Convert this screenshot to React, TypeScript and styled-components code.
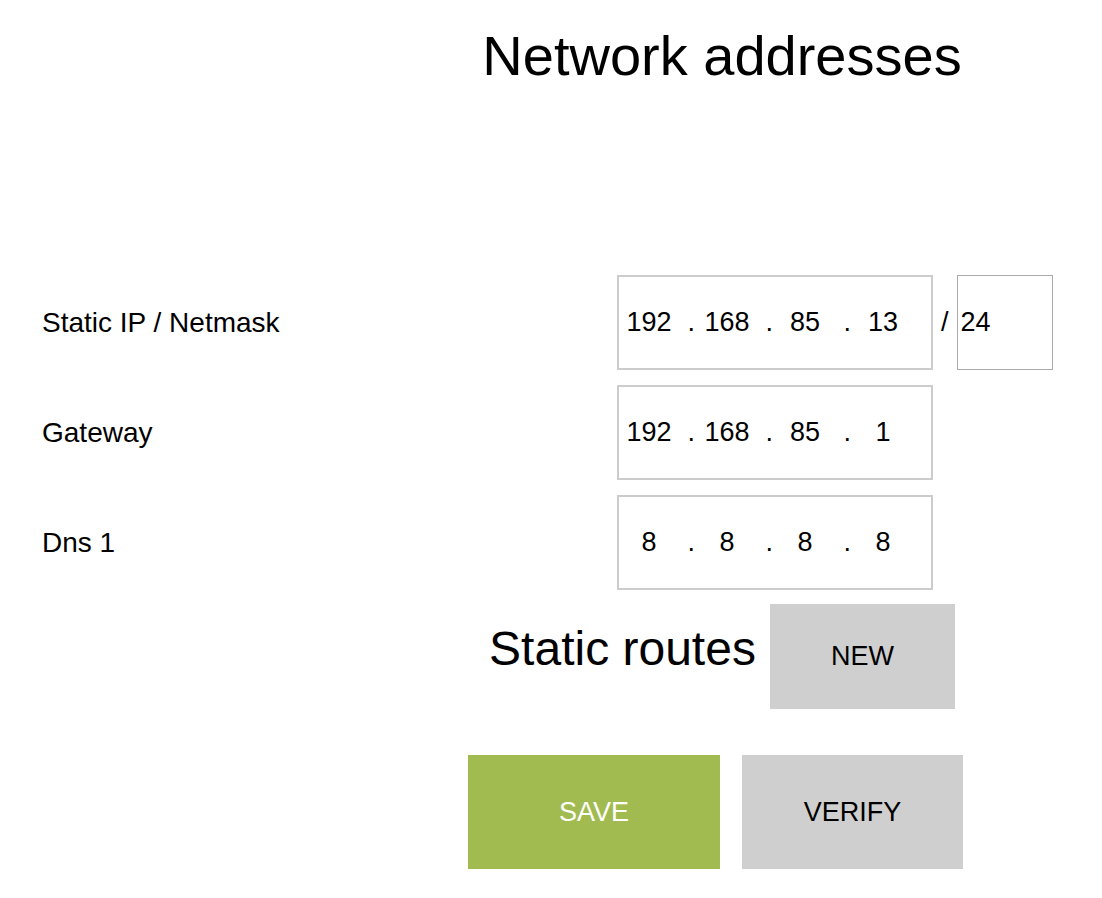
import React from "react";
import styled, { createGlobalStyle } from "styled-components";

const GlobalStyle = createGlobalStyle`
  html, body {
    margin: 0;
    padding: 0;
    background: #ffffff;
  }
  body {
    font-family: "Liberation Sans", Arial, sans-serif;
    color: #000000;
  }
`;

const Page = styled.div`
  width: 1102px;
  min-height: 898px;
  box-sizing: border-box;
`;

const Title = styled.h1`
  margin: 0;
  padding: 24px 0 0 342px;
  font-size: 56px;
  line-height: 64px;
  font-weight: 400;
  text-align: center;
`;

const Form = styled.div`
  margin-top: 187px;
  display: flex;
  flex-direction: column;
  gap: 15px;
`;

const Row = styled.div`
  display: flex;
  align-items: center;
  height: 95px;
  padding-left: 42px;
`;

const Label = styled.div`
  width: 575px;
  font-size: 28px;
`;

const IpBox = styled.div`
  box-sizing: border-box;
  width: 316px;
  height: 95px;
  border: 2px solid #cccccc;
  display: flex;
  align-items: center;
  font-size: 27px;
`;

const Octet = styled.span`
  width: 60px;
  text-align: center;
`;

const Dot = styled.span`
  width: 18px;
  box-sizing: border-box;
  padding-right: 2px;
  text-align: right;
`;

const Slash = styled.span`
  font-size: 27px;
  margin: 0 8px 0 8px;
`;

const MaskBox = styled.div`
  box-sizing: border-box;
  width: 96px;
  height: 95px;
  border: 1px solid #aaaaaa;
  display: flex;
  align-items: center;
  padding-left: 3px;
  font-size: 27px;
`;

const RoutesRow = styled.div`
  margin-top: 14px;
  display: flex;
  justify-content: center;
  padding-left: 342px;
`;

const RoutesTitle = styled.h2`
  margin: 17px 14px 0 0;
  font-size: 48px;
  line-height: 55px;
  font-weight: 400;
  align-self: flex-start;
`;

const Button = styled.button<{ $w: number; $h: number; $primary?: boolean }>`
  width: ${(p) => p.$w}px;
  height: ${(p) => p.$h}px;
  border: none;
  margin: 0;
  padding: 0;
  background: ${(p) => (p.$primary ? "#a2bb50" : "#cfcfcf")};
  color: ${(p) => (p.$primary ? "#ffffff" : "#000000")};
  font-family: "Liberation Sans", Arial, sans-serif;
  font-size: 27px;
  text-transform: uppercase;
`;

const Actions = styled.div`
  margin-top: 46px;
  display: flex;
  justify-content: center;
  gap: 22px;
  padding-left: 329px;
`;

const IpField: React.FC<{ parts: string[] }> = ({ parts }) => (
  <IpBox>
    {parts.map((p, i) => (
      <React.Fragment key={i}>
        <Octet>{p}</Octet>
        {i < parts.length - 1 && <Dot>.</Dot>}
      </React.Fragment>
    ))}
  </IpBox>
);

export default function App() {
  return (
    <Page>
      <GlobalStyle />
      <Title>Network addresses</Title>
      <Form>
        <Row>
          <Label>Static IP / Netmask</Label>
          <IpField parts={["192", "168", "85", "13"]} />
          <Slash>/</Slash>
          <MaskBox>24</MaskBox>
        </Row>
        <Row>
          <Label>Gateway</Label>
          <IpField parts={["192", "168", "85", "1"]} />
        </Row>
        <Row>
          <Label>Dns 1</Label>
          <IpField parts={["8", "8", "8", "8"]} />
        </Row>
      </Form>
      <RoutesRow>
        <RoutesTitle>Static routes</RoutesTitle>
        <Button $w={185} $h={105}>New</Button>
      </RoutesRow>
      <Actions>
        <Button $w={252} $h={114} $primary>Save</Button>
        <Button $w={221} $h={114}>Verify</Button>
      </Actions>
    </Page>
  );
}
